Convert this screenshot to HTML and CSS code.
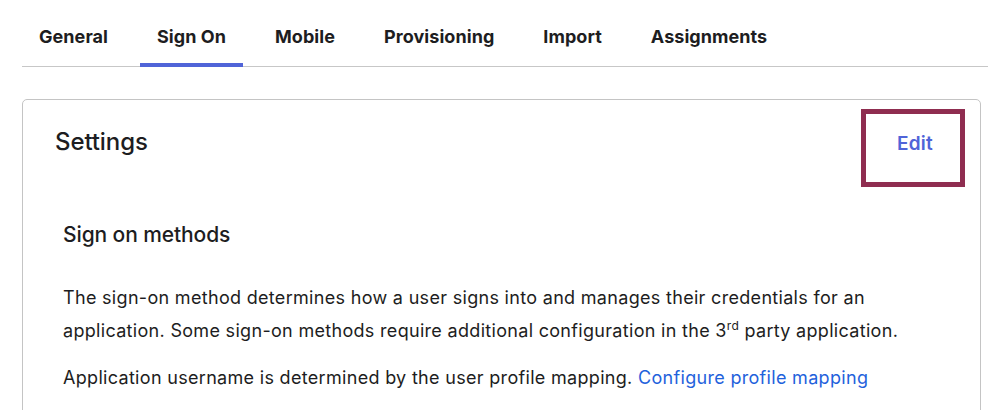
FILE: index.html
```html
<!DOCTYPE html>
<html lang="en">
<head>
<meta charset="utf-8">
<title>Sign On</title>
<link rel="stylesheet" href="styles.css">
</head>
<body>
<div class="page">
  <nav class="tabs">
    <a class="tab">General</a>
    <a class="tab active">Sign On</a>
    <a class="tab">Mobile</a>
    <a class="tab">Provisioning</a>
    <a class="tab">Import</a>
    <a class="tab">Assignments</a>
  </nav>
  <section class="card">
    <header class="card-head">
      <h2 class="card-title">Settings</h2>
      <div class="edit-box"><a class="edit">Edit</a></div>
    </header>
    <div class="card-body">
      <h3 class="sub-title">Sign on methods</h3>
      <p class="text">The sign-on method determines how a user signs into and manages their credentials for an application. Some sign-on methods require additional configuration in the 3<sup>rd</sup> party application.</p>
      <p class="text">Application username is determined by the user profile mapping. <a class="link">Configure profile mapping</a></p>
    </div>
  </section>
</div>
</body>
</html>
```
FILE: styles.css
```css
* { box-sizing: border-box; }
html, body { margin: 0; padding: 0; background: #fff; }
body {
  font-family: Inter, "Noto Sans", sans-serif;
  color: #1d1d21;
  overflow: hidden;
}
.page {
  padding: 0 0 0 22px;
  width: 988px;
}
.tabs {
  display: flex;
  gap: 15px;
  border-bottom: 1px solid #c7c7c7;
  height: 67px;
  padding-top: 23px;
}
.tab {
  font-size: 18px;
  font-weight: 700;
  letter-spacing: 0.06px;
  padding: 0 17px;
  line-height: 28px;
  height: 44px;
  color: #1d1d21;
  border-bottom: 4px solid transparent;
  margin-bottom: -1px;
}
.tab.active { border-bottom-color: #5064d8; }
.card {
  margin-top: 32px;
  width: 959px;
  height: 340px;
  border: 1px solid #c4c4c4;
  border-radius: 5px;
  padding: 9px 15px 0 32px;
}
.card-head {
  display: flex;
  justify-content: space-between;
  align-items: flex-start;
}
.card-title {
  margin: 19px 0 0 0;
  font-size: 24px;
  font-weight: 500;
  line-height: 28px;
  letter-spacing: -0.1px;
}
.edit-box {
  width: 104px;
  height: 78px;
  border: 5px solid #8f2d50;
  display: flex;
  align-items: center;
  justify-content: center;
}
.edit {
  font-size: 19px;
  font-weight: 600;
  letter-spacing: 0.3px;
  color: #5064d8;
  margin: -10px 0 0 4px;
}
.card-body { padding: 36px 0 0 8px; }
.sub-title {
  margin: 0;
  font-size: 21px;
  font-weight: 500;
  line-height: 24px;
  letter-spacing: -0.1px;
}
.text {
  margin: 34px 0 0 0;
  font-size: 18px;
  letter-spacing: 0.31px;
  line-height: 33px;
  width: 880px;
}
.text + .text { margin-top: 14px; }
.text sup { font-size: 12px; line-height: 0; vertical-align: 7px; }
.link { color: #1f62dc; }
```
